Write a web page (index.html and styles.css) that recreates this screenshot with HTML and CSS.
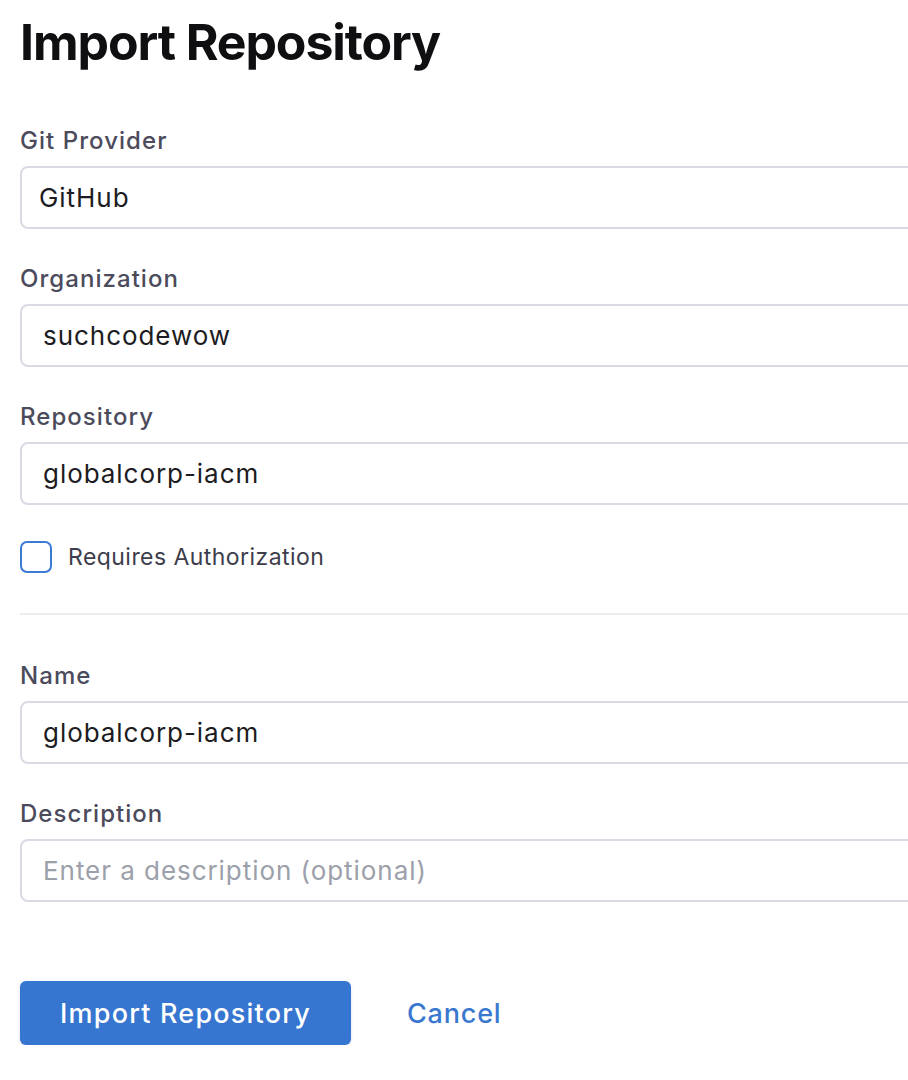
FILE: index.html
```html
<!DOCTYPE html>
<html lang="en">
<head>
<meta charset="utf-8">
<title>Import Repository</title>
<link rel="stylesheet" href="styles.css">
</head>
<body>
<main class="page">
  <h1 class="title">Import Repository</h1>
  <form class="form">
    <div class="field">
      <label class="label">Git Provider</label>
      <div class="input select">GitHub</div>
    </div>
    <div class="field">
      <label class="label">Organization</label>
      <div class="input">suchcodewow</div>
    </div>
    <div class="field">
      <label class="label">Repository</label>
      <div class="input">globalcorp-iacm</div>
    </div>
    <label class="check">
      <span class="box"></span>
      <span class="check-text">Requires Authorization</span>
    </label>
    <hr class="divider">
    <div class="field">
      <label class="label">Name</label>
      <div class="input">globalcorp-iacm</div>
    </div>
    <div class="field">
      <label class="label">Description</label>
      <div class="input placeholder">Enter a description (optional)</div>
    </div>
    <div class="actions">
      <button type="button" class="btn-primary">Import Repository</button>
      <button type="button" class="btn-link">Cancel</button>
    </div>
  </form>
</main>
</body>
</html>
```
FILE: styles.css
```css
html, body {
  margin: 0;
  padding: 0;
  background: #ffffff;
  overflow: hidden;
}
body {
  font-family: Inter, "Noto Sans", sans-serif;
  color: #1f1f26;
}
.page {
  padding: 12px 0 0 20px;
  width: 1000px;
}
.title {
  margin: 0;
  font-size: 50px;
  line-height: 60px;
  font-weight: 700;
  color: #0f0f12;
  letter-spacing: -1.1px;
}
.form {
  margin-top: 54px;
  display: flex;
  flex-direction: column;
}
.field {
  display: flex;
  flex-direction: column;
  gap: 10px;
  margin-bottom: 35px;
}
.label {
  font-size: 24px;
  line-height: 30px;
  font-weight: 500;
  color: #4b4b5c;
  letter-spacing: 1.05px;
}
.input {
  box-sizing: border-box;
  height: 63px;
  border: 2px solid #dcd9e4;
  border-radius: 8px;
  padding: 0 21px;
  display: flex;
  align-items: center;
  font-size: 26px;
  letter-spacing: 0.95px;
  color: #1c1c22;
}
.input.select {
  padding-left: 17px;
}
.input.placeholder {
  color: #9ba0aa;
}
.check {
  display: flex;
  align-items: center;
  gap: 16px;
  margin-top: 1px;
}
.box {
  box-sizing: border-box;
  width: 32px;
  height: 32px;
  border: 2px solid #3b7bd4;
  border-radius: 7px;
}
.check-text {
  font-size: 23px;
  letter-spacing: 0.45px;
  color: #3d3d4b;
}
.divider {
  margin: 40px 0 46px;
  border: 0;
  height: 2px;
  background: #ececf0;
}
.actions {
  display: flex;
  align-items: center;
  gap: 56px;
  margin-top: 44px;
}
.btn-primary {
  width: 331px;
  height: 64px;
  border: 0;
  border-radius: 6px;
  background: #3676d0;
  color: #ffffff;
  font-family: inherit;
  font-size: 27px;
  letter-spacing: 1.2px;
  font-weight: 500;
  box-shadow: 0 1px 3px rgba(40, 80, 160, 0.2);
}
.btn-link {
  border: 0;
  background: none;
  padding: 0;
  font-family: inherit;
  font-size: 27px;
  letter-spacing: 0.8px;
  font-weight: 500;
  color: #3a78cf;
}
```
